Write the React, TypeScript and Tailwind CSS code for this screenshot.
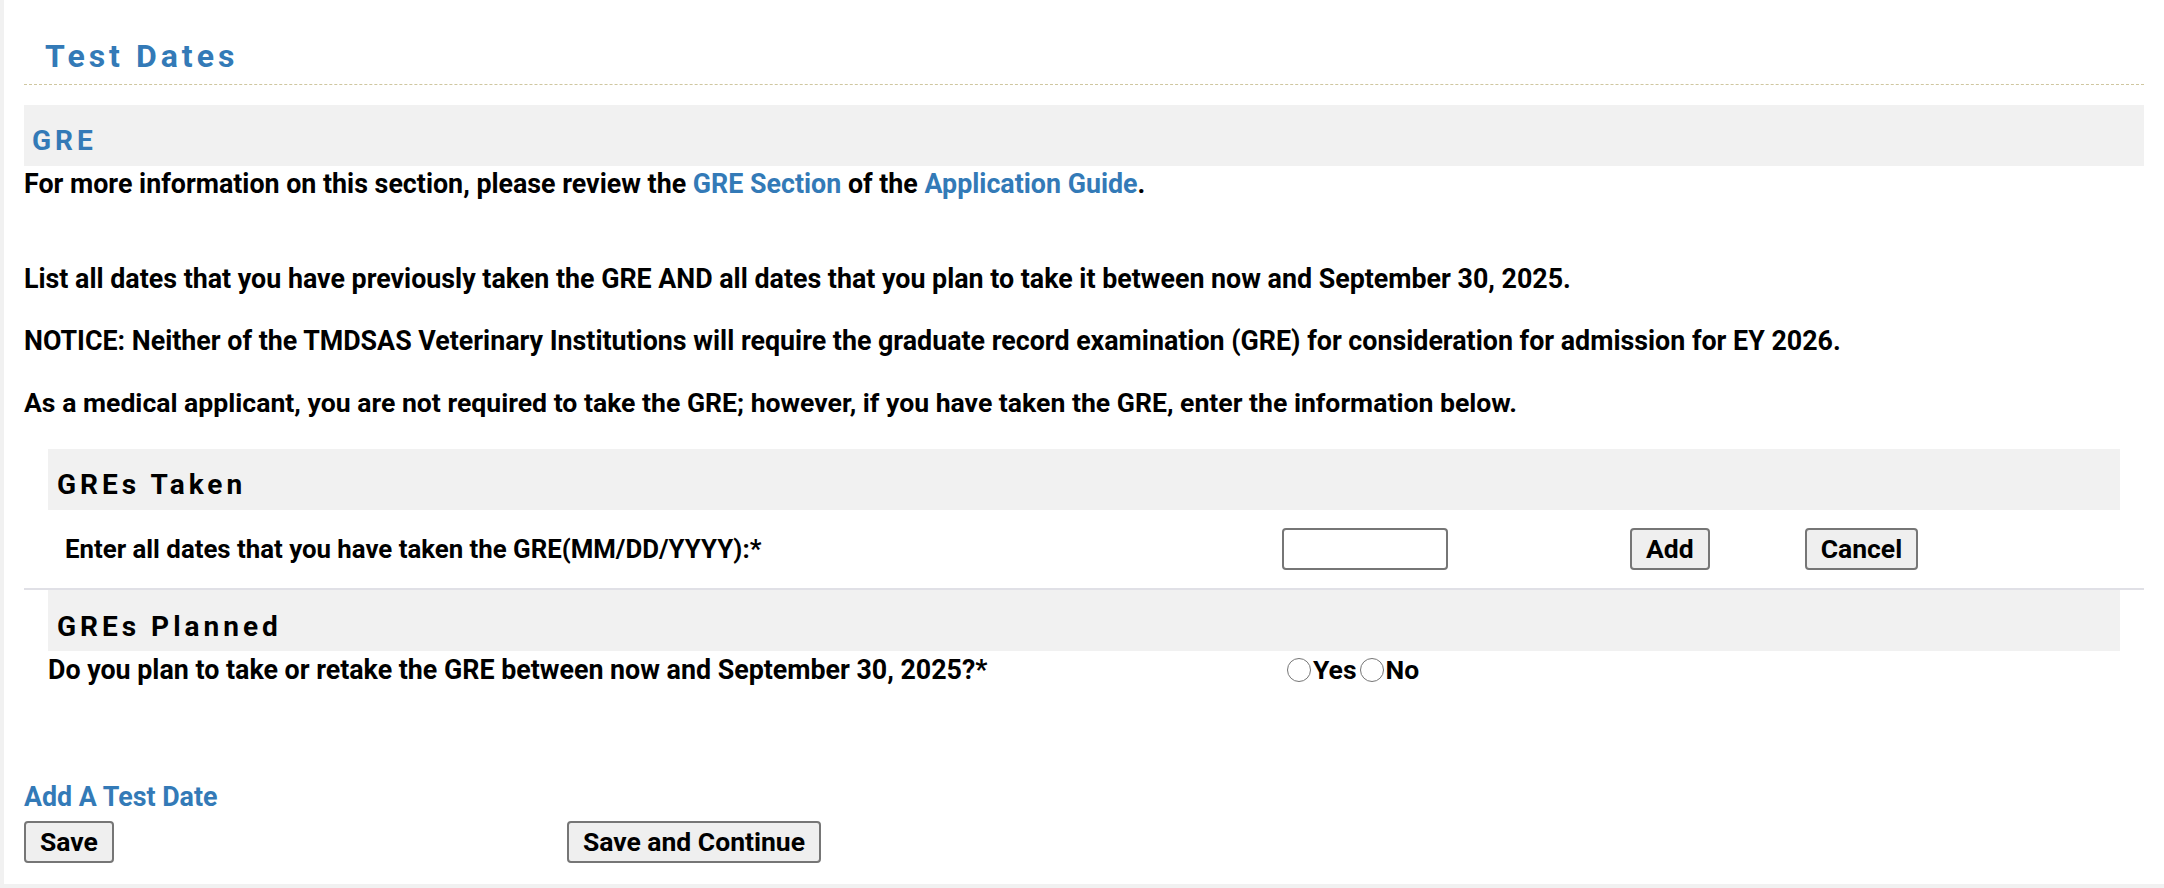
import React from "react";

const font = "font-[family-name:Roboto,'Liberation_Sans',sans-serif]";

function Btn({ children }: { children: React.ReactNode }) {
  return (
    <button
      type="button"
      className="h-[42px] px-[14px] bg-[#efefef] border-2 border-[#767676] rounded-[4px] text-[26.5px] font-bold text-black leading-none"
    >
      {children}
    </button>
  );
}

function Radio({ label }: { label: string }) {
  return (
    <label className="flex items-center">
      <span className="w-[24px] h-[24px] rounded-full border-[1.5px] border-[#767676] bg-white mr-[2px]" />
      <span className="text-[26.5px] font-bold leading-[30px]">{label}</span>
    </label>
  );
}

export default function App() {
  return (
    <div className={`${font} bg-[#f1f1f1] w-[2164px] h-[888px] pl-[4px]`}>
      <div className="bg-white h-[884px] px-[20px] text-black">
        <div className="pt-[36px] pb-[8px] border-b border-dashed border-[#cfc7a0]">
          <h2 className="pl-[21px] text-[32px] leading-[40px] font-bold tracking-[4px] text-[#337ab7]">
            Test Dates
          </h2>
        </div>

        <div className="mt-[20px] h-[61px] bg-[#f1f1f1] pt-[20px] pl-[8px]">
          <h3 className="text-[28px] leading-[32px] font-bold tracking-[4px] text-[#337ab7]">GRE</h3>
        </div>

        <p className="mt-[3px] text-[26.8px] leading-[30px] font-bold">
          For more information on this section, please review the{" "}
          <a className="text-[#337ab7]">GRE Section</a> of the{" "}
          <a className="text-[#337ab7]">Application Guide</a>.
        </p>

        <p className="mt-[65px] text-[26.8px] leading-[30px] font-bold">
          List all dates that you have previously taken the GRE AND all dates that you plan to take it between now and September 30, 2025.
        </p>
        <p className="mt-[32px] text-[26.8px] leading-[30px] font-bold">
          NOTICE: Neither of the TMDSAS Veterinary Institutions will require the graduate record examination (GRE) for consideration for admission for EY 2026.
        </p>
        <p className="mt-[32px] text-[26.6px] leading-[30px] font-bold">
          As a medical applicant, you are not required to take the GRE; however, if you have taken the GRE, enter the information below.
        </p>

        <div className="mt-[31px] mx-[24px] h-[61px] bg-[#f1f1f1] pt-[20px] pl-[9px]">
          <h4 className="text-[28px] leading-[32px] font-bold tracking-[4px]">GREs Taken</h4>
        </div>
        <div className="mx-[24px] h-[78px] flex items-center">
          <div className="w-[1234px] pl-[17px] text-[25.8px] leading-[30px] font-bold">
            Enter all dates that you have taken the GRE(MM/DD/YYYY):*
          </div>
          <input
            type="text"
            className="w-[166px] h-[42px] border-2 border-[#767676] rounded-[4px] bg-white"
          />
          <div className="ml-[182px]">
            <Btn>Add</Btn>
          </div>
          <div className="ml-[95px]">
            <Btn>Cancel</Btn>
          </div>
        </div>
        <div className="h-[2px] bg-[#e0e0e6]" />

        <div className="mx-[24px] h-[61px] bg-[#f1f1f1] pt-[21px] pl-[9px]">
          <h4 className="text-[28px] leading-[32px] font-bold tracking-[4px]">GREs Planned</h4>
        </div>
        <div className="mt-[4px] mx-[24px] flex items-center">
          <div className="w-[1239px] text-[26.8px] leading-[30px] font-bold">
            Do you plan to take or retake the GRE between now and September 30, 2025?*
          </div>
          <div className="flex items-center gap-[3px]">
            <Radio label="Yes" />
            <Radio label="No" />
          </div>
        </div>

        <a className="block mt-[97px] text-[26.8px] leading-[30px] font-bold text-[#337ab7]">Add A Test Date</a>
        <div className="mt-[9px] flex">
          <Btn>Save</Btn>
          <div className="ml-[453px]">
            <Btn>Save and Continue</Btn>
          </div>
        </div>
      </div>
    </div>
  );
}
